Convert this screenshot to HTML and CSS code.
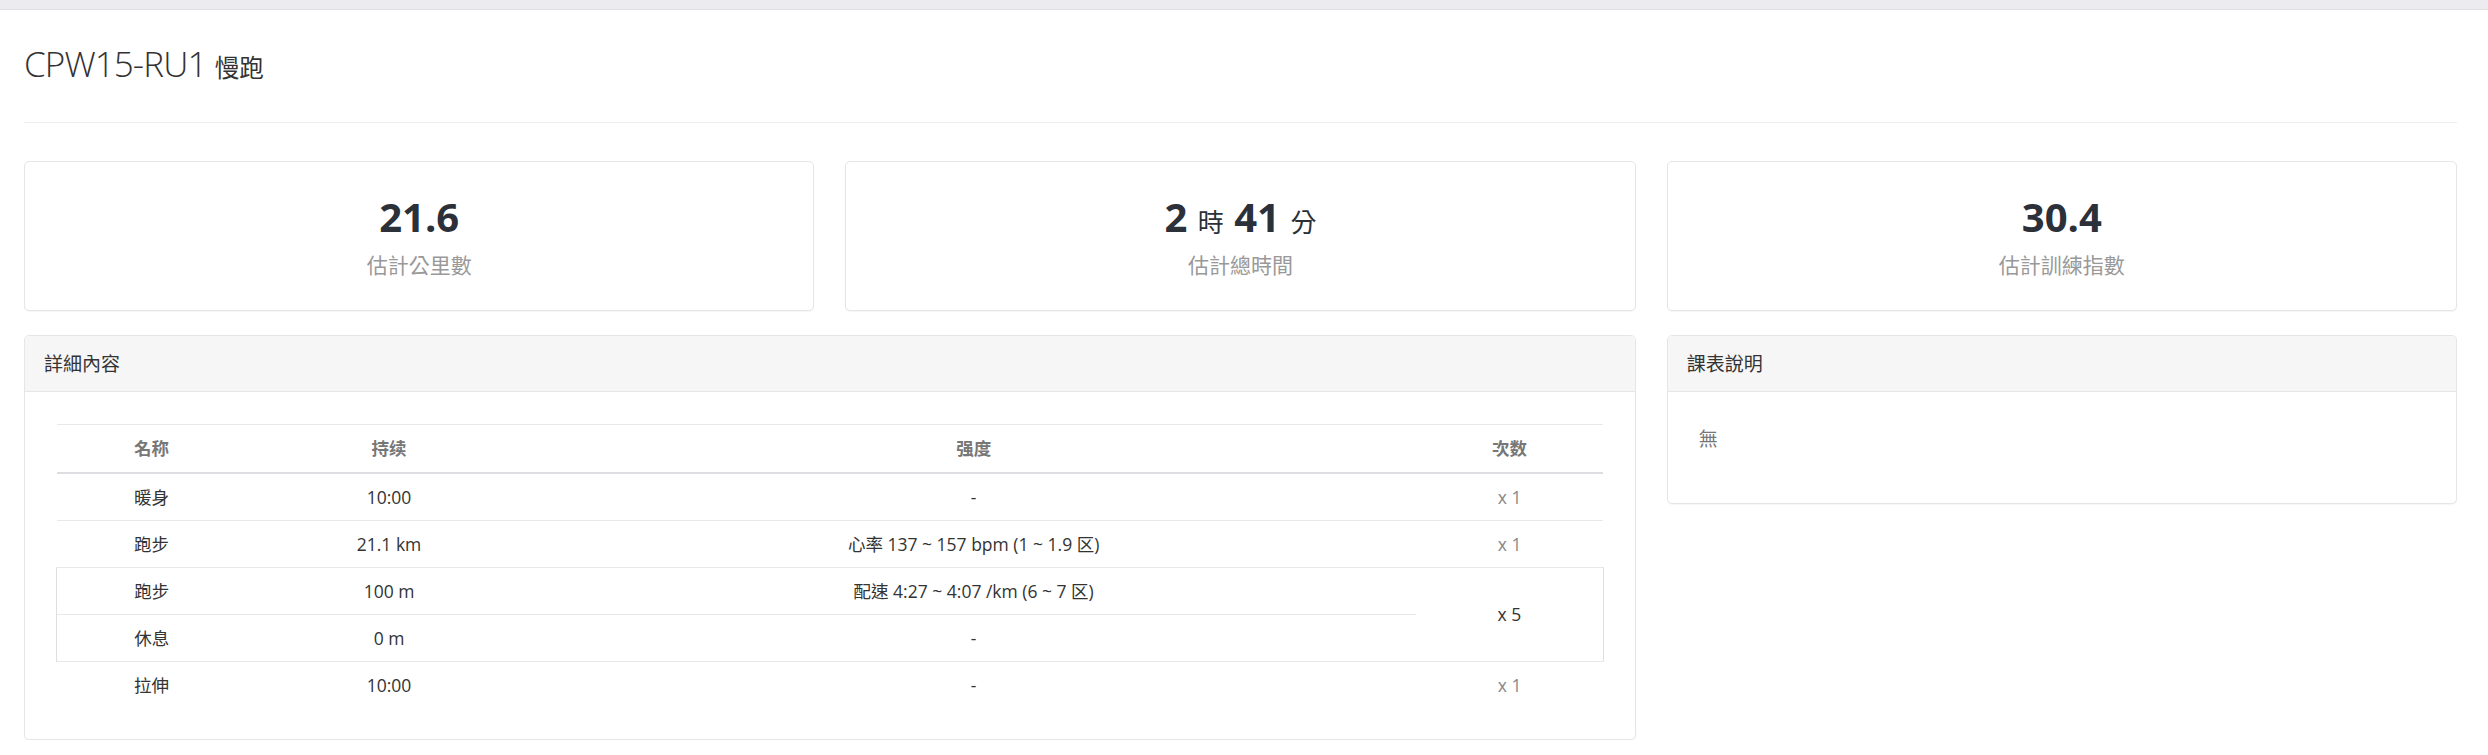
FILE: index.html
```html
<!DOCTYPE html>
<html lang="zh-Hant">
<head>
<meta charset="utf-8">
<title>CPW15-RU1 慢跑</title>
<link rel="stylesheet" href="styles.css">
</head>
<body>
<div class="topbar"></div>
<div class="page">
  <div class="page-header">
    <h1 class="title">CPW15-RU1 <small>慢跑</small></h1>
  </div>

  <div class="stats">
    <div class="card">
      <div class="num">21.6</div>
      <div class="label">估計公里數</div>
    </div>
    <div class="card">
      <div class="num">2 <small>時</small> 41 <small>分</small></div>
      <div class="label">估計總時間</div>
    </div>
    <div class="card">
      <div class="num">30.4</div>
      <div class="label">估計訓練指數</div>
    </div>
  </div>

  <div class="panels">
    <div class="panel panel-wide">
      <div class="panel-heading">詳細內容</div>
      <div class="panel-body">
        <table class="steps">
          <colgroup>
            <col class="c-name">
            <col class="c-dur">
            <col class="c-int">
            <col class="c-cnt">
          </colgroup>
          <thead>
            <tr><th>名称</th><th>持续</th><th>强度</th><th>次数</th></tr>
          </thead>
          <tbody>
            <tr><td>暖身</td><td>10:00</td><td>-</td><td class="count">x 1</td></tr>
            <tr><td>跑步</td><td>21.1 km</td><td>心率 137 ~ 157 bpm (1 ~ 1.9 区)</td><td class="count">x 1</td></tr>
            <tr><td class="grp-first">跑步</td><td>100 m</td><td>配速 4:27 ~ 4:07 /km (6 ~ 7 区)</td><td class="grp-count" rowspan="2">x 5</td></tr>
            <tr><td class="grp-first">休息</td><td>0 m</td><td>-</td></tr>
            <tr><td>拉伸</td><td>10:00</td><td>-</td><td class="count">x 1</td></tr>
          </tbody>
        </table>
      </div>
    </div>
    <div class="panel">
      <div class="panel-heading">課表說明</div>
      <div class="panel-body">
        <p class="note">無</p>
      </div>
    </div>
  </div>
</div>
</body>
</html>
```

FILE: styles.css
```css
* { box-sizing: border-box; }

body {
  margin: 0;
  background: #ffffff;
  color: #333333;
  font-family: "Open Sans", "Noto Sans CJK TC", sans-serif;
}

.topbar {
  height: 10px;
  background: #ececf0;
  border-bottom: 1px solid #dfe0e4;
}

.page {
  padding: 0 31px 0 24px;
}

.page-header {
  padding: 35px 0 38px;
  border-bottom: 1px solid #ececec;
}

.title {
  margin: 0;
  font-size: 35px;
  font-weight: 300;
  line-height: 38.5px;
  letter-spacing: -0.9px;
  color: #333333;
}

.title small {
  font-size: 24.5px;
  font-weight: 400;
  line-height: 1;
  letter-spacing: 0;
}

.stats {
  display: grid;
  grid-template-columns: repeat(3, 1fr);
  gap: 31px;
  margin-top: 38px;
}

.card {
  background: #ffffff;
  border: 1px solid #e6e6e6;
  border-radius: 5px;
  box-shadow: 0 1px 1px rgba(0, 0, 0, 0.04);
  text-align: center;
  padding: 33px 10px 29px;
}

.num {
  font-size: 40px;
  font-weight: 700;
  line-height: 44px;
  color: #2b3039;
}

.num small {
  font-size: 26px;
  font-weight: 400;
  line-height: 1;
}

.label {
  margin-top: 11px;
  font-size: 21px;
  line-height: 31.5px;
  color: #999999;
}

.panels {
  display: grid;
  grid-template-columns: repeat(3, 1fr);
  gap: 31px;
  margin-top: 24px;
  align-items: start;
}

.panel {
  background: #ffffff;
  border: 1px solid #e6e6e6;
  border-radius: 5px;
  box-shadow: 0 1px 1px rgba(0, 0, 0, 0.04);
}

.panel-wide {
  grid-column: span 2;
}

.panel-heading {
  background: #f6f6f6;
  border-bottom: 1px solid #e6e6e6;
  border-radius: 5px 5px 0 0;
  padding: 12.5px 19px;
  font-size: 19px;
  line-height: 30px;
  color: #333333;
}

.panel-body {
  padding: 32px 31px 31px;
}

.steps {
  width: 100%;
  border-collapse: collapse;
  table-layout: fixed;
  font-size: 17.5px;
}

.c-name { width: 12.3%; }
.c-dur { width: 18.4%; }
.c-int { width: 57.2%; }
.c-cnt { width: 12.1%; }

.steps th,
.steps td {
  padding: 10.5px 10px;
  line-height: 25px;
  text-align: center;
  border-top: 1px solid #e8e8e8;
  color: #333333;
}

.steps thead th {
  padding: 11px 10px 11px;
  border-bottom: 2px solid #dcdee2;
  color: #777777;
  font-weight: 700;
}

.steps .count {
  color: #888888;
}

.steps .grp-first {
  border-left: 1px solid #dcdee2;
}

.steps .grp-count {
  border-right: 1px solid #dcdee2;
  border-bottom: 1px solid #e8e8e8;
  color: #333333;
}

.note {
  margin: 0 0 17px;
  font-size: 19px;
  line-height: 31px;
  color: #777777;
}
```
